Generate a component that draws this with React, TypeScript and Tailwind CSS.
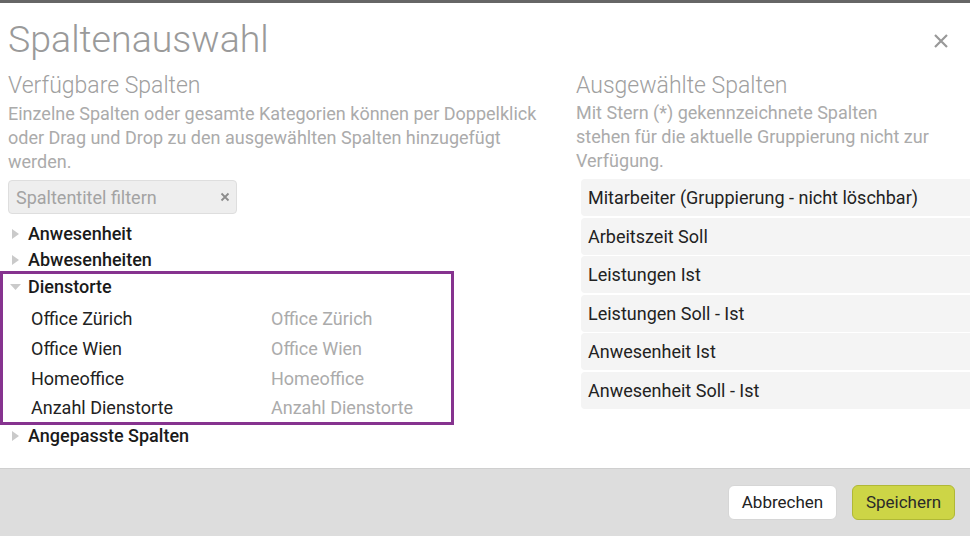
import React from 'react';

const available = [
  { name: 'Anwesenheit', open: false },
  { name: 'Abwesenheiten', open: false },
];

const dienstorte = ['Office Zürich', 'Office Wien', 'Homeoffice', 'Anzahl Dienstorte'];

const selected = [
  'Mitarbeiter (Gruppierung - nicht löschbar)',
  'Arbeitszeit Soll',
  'Leistungen Ist',
  'Leistungen Soll - Ist',
  'Anwesenheit Ist',
  'Anwesenheit Soll - Ist',
];

function Caret({ open }: { open?: boolean }) {
  if (open) {
    return (
      <svg width="11" height="6" viewBox="0 0 11 6" className="shrink-0 mt-[2px]">
        <polygon points="0,0 11,0 5.5,6" fill="#cacaca" />
      </svg>
    );
  }
  return (
    <svg width="7" height="10" viewBox="0 0 7 10" className="shrink-0 mt-[2px]">
      <polygon points="0,0 7,5 0,10" fill="#cacaca" />
    </svg>
  );
}

export default function App() {
  return (
    <div
      className="w-[970px] h-[536px] overflow-hidden bg-white flex flex-col border-t-[3px] border-[#666]"
      style={{ fontFamily: 'Roboto, "Open Sans", sans-serif' }}
    >
      {/* header */}
      <div className="flex items-start justify-between pl-2 pr-[21px] pt-[16px] h-[70px] shrink-0">
        <h1 className="text-[37.5px] leading-[40px] font-light text-[#9a9a9a]">Spaltenauswahl</h1>
        <svg width="16" height="16" viewBox="0 0 16 16" className="mt-[14px]">
          <path d="M2 2 L14 14 M14 2 L2 14" stroke="#999" strokeWidth="2.2" />
        </svg>
      </div>

      {/* body */}
      <div className="flex flex-1 min-h-0">
        {/* left */}
        <div className="w-[576px] shrink-0 flex flex-col">
          <div className="pl-2">
            <h2 className="text-[23px] leading-[24px] font-light text-[#a0a0a0] mt-[1px]">Verfügbare Spalten</h2>
            <p className="mt-[4px] text-[18px] leading-[24px] text-[#ababab]">
              Einzelne Spalten oder gesamte Kategorien können per Doppelklick
              <br />
              oder Drag und Drop zu den ausgewählten Spalten hinzugefügt
              <br />
              werden.
            </p>
            <div className="mt-[6px] w-[229px] h-[34px] rounded-[4px] border border-[#dedede] bg-[#eeeeee] flex items-center justify-between pl-[7px] pr-[6px]">
              <span className="text-[18px] text-[#a3a3a3]">Spaltentitel filtern</span>
              <svg width="10" height="10" viewBox="0 0 10 10">
                <path d="M1.5 1.5 L8.5 8.5 M8.5 1.5 L1.5 8.5" stroke="#8c8c8c" strokeWidth="1.8" />
              </svg>
            </div>
          </div>

          <div className="mt-[6px] flex flex-col">
            {available.map((c) => (
              <div key={c.name} className="h-[26px] flex items-center gap-[9px] pl-[12px] text-[18px] font-medium text-[#1a1a1a]">
                <Caret />
                <span>{c.name}</span>
              </div>
            ))}
            <div className="-mt-[1px] w-[454px] border-[3px] border-[#86338f] flex flex-col">
              <div className="h-[24px] flex items-center gap-[7px] pl-[7px] text-[18px] font-medium text-[#1a1a1a]">
                <Caret open />
                <span>Dienstorte</span>
              </div>
              <div className="mt-[5px] flex flex-col">
                {dienstorte.map((d, i) => (
                  <div key={d} className={`${i === 3 ? 'h-[29px]' : 'h-[30px]'} flex items-center text-[18px]`}>
                    <span className="w-[268px] pl-[28px] text-[#222]">{d}</span>
                    <span className="text-[#ababab]">{d}</span>
                  </div>
                ))}
              </div>
            </div>
            <div className="h-[20px] flex items-center gap-[9px] pl-[12px] text-[18px] font-medium text-[#1a1a1a]">
              <Caret />
              <span>Angepasste Spalten</span>
            </div>
          </div>
        </div>

        {/* right */}
        <div className="flex-1 flex flex-col">
          <h2 className="text-[23px] leading-[24px] font-light text-[#a0a0a0] mt-[1px]">Ausgewählte Spalten</h2>
          <p className="mt-[3px] text-[18px] leading-[24px] text-[#ababab]">
            Mit Stern (*) gekennzeichnete Spalten
            <br />
            stehen für die aktuelle Gruppierung nicht zur
            <br />
            Verfügung.
          </p>
          <div className="mt-[6px] ml-[5px] w-[420px] flex flex-col gap-[1.6px]">
            {selected.map((s) => (
              <div key={s} className="h-[37px] rounded-[4px] bg-[#f4f4f4] flex items-center pl-[7px] text-[18px] text-[#222]">
                {s}
              </div>
            ))}
          </div>
        </div>
      </div>

      {/* footer */}
      <div className="h-[68px] shrink-0 border-t border-[#cfcfcf] bg-[#dddddd] flex items-center justify-end gap-[15px] pr-[15px]">
        <button className="h-[35px] w-[109px] rounded-[6px] border border-[#d6d6d6] bg-white text-[17px] text-[#222]">
          Abbrechen
        </button>
        <button className="h-[35px] w-[103px] rounded-[6px] border border-[#b0b836] bg-[#cdd546] text-[17px] text-[#2a2a2a]">
          Speichern
        </button>
      </div>
    </div>
  );
}
